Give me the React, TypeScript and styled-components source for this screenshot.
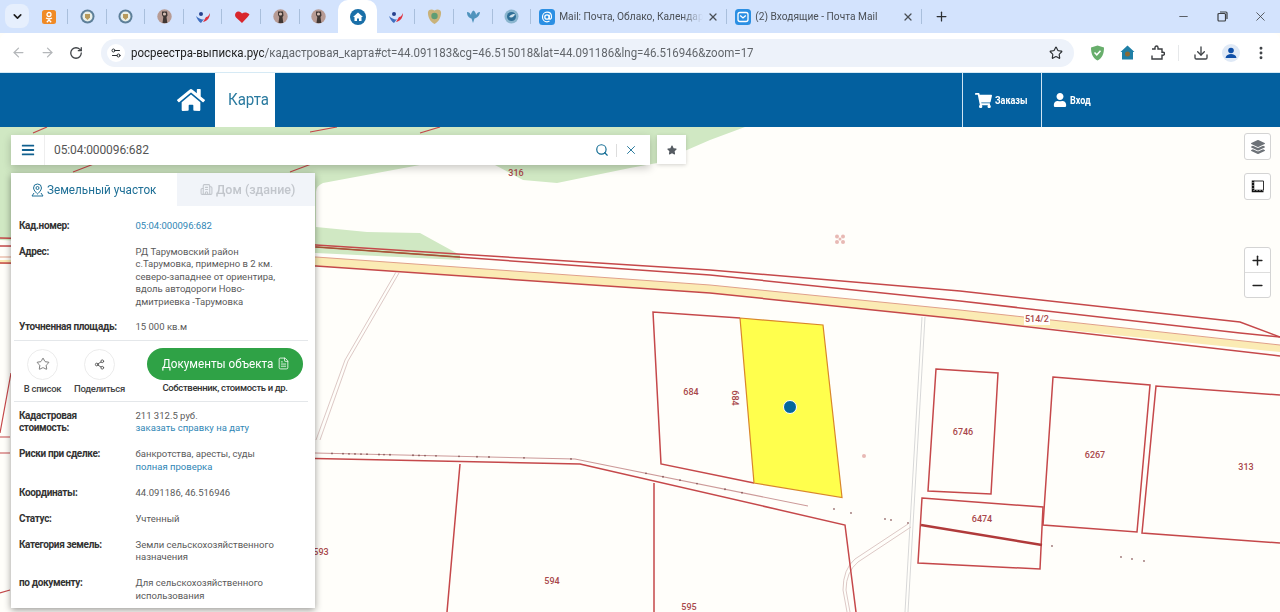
import React from "react";
import styled, { createGlobalStyle } from "styled-components";
import {
  ArrowLeft,
  ArrowRight,
  Building2,
  ChevronDown,
  Download,
  FileText,
  Minus,
  MoreVertical,
  Plus,
  RotateCw,
  Search,
  Settings2,
  Share2,
  Star,
  X
} from "lucide-react";
import { FaBars, FaHome, FaLayerGroup, FaShoppingCart, FaStar, FaUser } from "react-icons/fa";

const GlobalStyle = createGlobalStyle`
  html, body {
    margin: 0;
    padding: 0;
    height: 612px;
    overflow: hidden;
    background: #fffefa;
    font-family: "Roboto", "Liberation Sans", sans-serif;
  }
`;

const Page = styled.div`
  width: 1280px;
  height: 612px;
  display: flex;
  flex-direction: column;
  overflow: hidden;
`;

const Squeezed = styled.span<{ $x: number }>`
  display: inline-block;
  transform: scaleX(${(p) => p.$x});
  transform-origin: left center;
  white-space: nowrap;
`;

/* browser chrome */
const TabStrip = styled.div`
  height: 33px;
  flex: none;
  background: #d3e3fd;
  display: flex;
  align-items: center;
  padding-left: 5px;
  color: #3c4043;
`;
const TabList = styled.div`
  display: flex;
  align-items: center;
  margin-left: 0.5px;
`;
const ListButton = styled.div`
  width: 24px;
  height: 24px;
  margin-top: -1px;
  border-radius: 8px;
  background: #e6effd;
  display: flex;
  align-items: center;
  justify-content: center;
  color: #1f1f1f;
`;
const PinnedTab = styled.div<{ $active?: boolean; $divider?: boolean }>`
  position: relative;
  width: 38.6px;
  height: 33px;
  flex: none;
  display: flex;
  align-items: center;
  justify-content: center;
  background: ${(p) => (p.$active ? "#fff" : "transparent")};
  border-radius: ${(p) => (p.$active ? "10px 10px 0 0" : "0")};
  &::after {
    content: "";
    display: ${(p) => (p.$divider ? "block" : "none")};
    position: absolute;
    right: 0;
    top: 9px;
    width: 1px;
    height: 15px;
    background: #a9bfdc;
  }
`;
const WideTab = styled.div<{ $width: number }>`
  width: ${(p) => p.$width}px;
  height: 33px;
  flex: none;
  display: flex;
  align-items: center;
  padding: 0 8px;
  box-sizing: border-box;
  gap: 4px;
  position: relative;
  font-size: 10.2px;
  color: #4a4f55;
  &::after {
    content: "";
    position: absolute;
    right: 0;
    top: 9px;
    width: 1px;
    height: 15px;
    background: #a9bfdc;
  }
`;
const WideTitle = styled.span`
  flex: 1;
  white-space: nowrap;
  overflow: hidden;
  -webkit-mask-image: linear-gradient(90deg, #000 85%, transparent);
  mask-image: linear-gradient(90deg, #000 85%, transparent);
`;
const NewTab = styled.div`
  width: 38px;
  display: flex;
  justify-content: center;
  color: #2c2f33;
`;
const WindowButtons = styled.div`
  margin-left: auto;
  display: flex;
  align-items: center;
  color: #3d4043;
`;
const WindowButton = styled.div`
  width: 38.5px;
  display: flex;
  justify-content: center;
`;

const Toolbar = styled.div`
  height: 39px;
  flex: none;
  background: #fff;
  border-radius: 8px 8px 0 0;
  display: flex;
  align-items: center;
  position: relative;
`;
const NavIcons = styled.div`
  display: flex;
  align-items: center;
  gap: 14px;
  padding-left: 11px;
  width: 101px;
  box-sizing: border-box;
  color: #3f4347;
`;
const Omnibox = styled.div`
  width: 973px;
  height: 28px;
  border-radius: 14px;
  background: #edf2fa;
  display: flex;
  align-items: center;
  font-size: 12.4px;
  color: #62666b;
  padding: 0 11px 0 6px;
  box-sizing: border-box;
`;
const TuneBadge = styled.div`
  width: 18px;
  height: 18px;
  border-radius: 50%;
  background: #fff;
  display: flex;
  align-items: center;
  justify-content: center;
  color: #2b2f33;
  margin-right: 6px;
`;
const Domain = styled.span`
  color: #1f1f1f;
`;
const UrlText = styled(Squeezed)`
  flex: 1;
`;
const ExtIcons = styled.div`
  display: flex;
  align-items: center;
  padding-left: 8px;
  color: #3f4347;
`;
const ExtSlot = styled.div`
  width: 30px;
  display: flex;
  justify-content: center;
`;
const ExtDivider = styled.div`
  width: 1px;
  height: 16px;
  margin: 0 7px 0 6px;
  background: #e6e8ea;
`;

/* site header */
const SiteHeader = styled.header`
  height: 55px;
  flex: none;
  background: #03609f;
  display: flex;
  padding-left: 177px;
  color: #fff;
  border-top: 1px solid #d6eaf5;
  box-sizing: border-box;
`;
const HomeLink = styled.div`
  width: 38px;
  display: flex;
  align-items: center;
  color: #fff;
`;
const MapTab = styled.div`
  width: 60px;
  background: #fff;
  color: #2a7a9f;
  font-size: 16px;
  display: flex;
  align-items: center;
  padding: 0 0 2px 13px;
  box-sizing: border-box;
`;
const HeaderCell = styled.div<{ $width: number; $pad: number }>`
  width: ${(p) => p.$width}px;
  box-sizing: border-box;
  border-left: 1px solid #cfe4f2;
  display: flex;
  align-items: center;
  padding-left: ${(p) => p.$pad}px;
  gap: 3px;
  font-size: 11px;
  font-weight: 700;
`;
const HeaderSpacer = styled.div`
  flex: 1;
`;

/* map */
const MapArea = styled.main`
  position: relative;
  flex: 1;
  overflow: hidden;
  background: #fffefa;
`;
const MapCanvas = styled.svg`
  display: block;
  width: 1280px;
  height: 485px;
`;
const MapLabel = styled.text`
  font-family: "Roboto", sans-serif;
  font-size: 9px;
  font-weight: 500;
  fill: #a8474a;
  text-anchor: middle;
`;

const SearchRow = styled.div`
  position: absolute;
  left: 11px;
  top: 8px;
  display: flex;
  gap: 7px;
`;
const SearchBar = styled.div`
  width: 639px;
  height: 30px;
  background: #fff;
  display: flex;
  align-items: center;
  box-shadow: 0 3px 8px rgba(0, 0, 0, 0.22);
  font-size: 12px;
  color: #555;
`;
const MenuButton = styled.div`
  width: 33px;
  height: 30px;
  border-right: 1px solid #eee;
  display: flex;
  align-items: center;
  justify-content: center;
  color: #10608f;
`;
const SearchValue = styled.div`
  flex: 1;
  padding-left: 9px;
  letter-spacing: -0.1px;
`;
const SearchActions = styled.div`
  display: flex;
  align-items: center;
  gap: 7px;
  padding-right: 12px;
  color: #0f6a92;
`;
const ActionDivider = styled.span`
  width: 1px;
  height: 13px;
  background: #ddd;
`;
const StarButton = styled.div`
  width: 29px;
  height: 29px;
  background: #fff;
  display: flex;
  align-items: center;
  justify-content: center;
  color: #555b62;
  box-shadow: 0 1px 4px rgba(0, 0, 0, 0.18);
`;

const Panel = styled.aside`
  position: absolute;
  left: 11px;
  top: 46px;
  width: 304px;
  height: 435px;
  background: #fff;
  box-shadow: 0 2px 7px rgba(0, 0, 0, 0.4);
  overflow: hidden;
`;
const PanelTabs = styled.div`
  display: flex;
  height: 33px;
  font-size: 13px;
`;
const PanelTab = styled.div<{ $active?: boolean }>`
  width: ${(p) => (p.$active ? 166 : 138)}px;
  box-sizing: border-box;
  padding-left: ${(p) => (p.$active ? 20 : 23)}px;
  display: flex;
  align-items: center;
  gap: 3px;
  white-space: nowrap;
  background: ${(p) => (p.$active ? "#fff" : "#f1f4f9")};
  color: ${(p) => (p.$active ? "#1e6f96" : "#c2c6cc")};
  font-weight: ${(p) => (p.$active ? 400 : 500)};
`;
const RowList = styled.div<{ $top: number; $gap: number }>`
  display: flex;
  flex-direction: column;
  gap: ${(p) => p.$gap}px;
  padding: ${(p) => p.$top}px 8px 0 8px;
`;
const Row = styled.div`
  display: grid;
  grid-template-columns: 116.5px 1fr;
  font-size: 10px;
  line-height: 12.5px;
`;
const RowLabel = styled.div`
  font-weight: 700;
  color: #333;
  letter-spacing: -0.35px;
`;
const RowValue = styled.div`
  color: #5a5a5a;
  font-size: 9.5px;
`;
const Link = styled.div`
  color: #2f86b5;
`;
const ActionBar = styled.div`
  margin: 6px 7px 0 3px;
  height: 62px;
  box-sizing: border-box;
  border-top: 1px solid #e4e7ea;
  border-bottom: 1px solid #e4e7ea;
  display: flex;
  padding-top: 8px;
`;
const CircleAction = styled.div`
  width: 57px;
  display: flex;
  flex-direction: column;
  align-items: center;
  gap: 3px;
  font-size: 9.5px;
  font-weight: 500;
  color: #444;
  letter-spacing: -0.3px;
  white-space: nowrap;
`;
const Circle = styled.div`
  width: 31px;
  height: 31px;
  border-radius: 50%;
  border: 1px solid #ececec;
  box-sizing: border-box;
  display: flex;
  align-items: center;
  justify-content: center;
  color: #555;
`;
const DocsColumn = styled.div`
  margin: -1px 0 0 19px;
  width: 156px;
  display: flex;
  flex-direction: column;
  align-items: center;
  gap: 1px;
`;
const DocsButton = styled.div`
  width: 156px;
  height: 32px;
  box-sizing: border-box;
  padding-left: 15px;
  border-radius: 16px;
  background: #2fa246;
  color: #fff;
  display: flex;
  align-items: center;
  font-size: 13px;
`;
const DocsLabel = styled(Squeezed)`
  width: 115px;
`;
const DocsCaption = styled.div`
  font-size: 9.5px;
  font-weight: 500;
  color: #333;
  letter-spacing: -0.35px;
  white-space: nowrap;
  line-height: 13px;
`;

const MapControls = styled.div`
  position: absolute;
  right: 9px;
  top: 6px;
  display: flex;
  flex-direction: column;
`;
const MapButton = styled.div<{ $gap?: number }>`
  width: 27px;
  height: 27px;
  margin-bottom: ${(p) => p.$gap ?? 0}px;
  background: #fff;
  border: 1px solid #d4d4d4;
  border-radius: 3px;
  box-sizing: border-box;
  display: flex;
  align-items: center;
  justify-content: center;
  color: #222;
`;
const ZoomBox = styled.div`
  width: 27px;
  height: 51px;
  background: #fff;
  border: 1px solid #d4d4d4;
  border-radius: 3px;
  box-sizing: border-box;
  display: flex;
  flex-direction: column;
`;
const ZoomStep = styled.div`
  flex: 1;
  display: flex;
  align-items: center;
  justify-content: center;
  color: #222;
  & + & {
    border-top: 1px solid #ddd;
  }
`;

function Favicon({ kind }: { kind: string }) {
  switch (kind) {
    case "ok":
      return (
        <svg width="14" height="14" viewBox="0 0 14 14">
          <rect width="14" height="14" rx="2.5" fill="#f08a25" />
          <circle cx="7" cy="4.5" r="2" fill="none" stroke="#fff" strokeWidth="1.3" />
          <path d="M4 8c2 1.2 4 1.2 6 0M7 9v1M4.8 12.2 7 10l2.2 2.2" fill="none" stroke="#fff" strokeWidth="1.3" />
        </svg>
      );
    case "emblem":
      return (
        <svg width="15" height="15" viewBox="0 0 15 15">
          <circle cx="7.5" cy="7.5" r="7" fill="#5d7f99" />
          <circle cx="7.5" cy="7.5" r="5" fill="#e9efe8" />
          <path d="M5 5h5v3.5L7.5 11 5 8.5z" fill="#b79a5c" />
        </svg>
      );
    case "portrait":
      return (
        <svg width="15" height="15" viewBox="0 0 15 15">
          <circle cx="7.5" cy="7.5" r="7.2" fill="#b79b94" />
          <path d="M5 2.5h5l.5 4-1 1.5.8 6H5.5l.8-6-1.3-2z" fill="#3f3633" />
          <circle cx="7.5" cy="5" r="1.6" fill="#d3bcb2" />
        </svg>
      );
    case "flag":
      return (
        <svg width="16" height="14" viewBox="0 0 16 14">
          <circle cx="6" cy="4" r="2" fill="#27418e" />
          <path d="M1 6c3 3 7 4 8 3l-3 4C4 12 2 9 1 6z" fill="#3f6fc0" />
          <path d="M15 3c0 4-2 8-7 9l3-5c2 0 3-2 4-4z" fill="#de3341" />
        </svg>
      );
    case "heart":
      return (
        <svg width="16" height="14" viewBox="0 0 16 14">
          <path d="M8 13 2 7.500C0 5 1.500 2 4 1.500 6 1.200 7 2.500 8 3.500 10 2 13 2 15.500 4.500 13 8 10.500 10 8 13z" fill="#d8262c" />
        </svg>
      );
    case "home":
      return (
        <svg width="16" height="16" viewBox="0 0 16 16">
          <circle cx="8" cy="8" r="8" fill="#1a6fa8" />
          <path d="M8 3.500 3 8h1.500v4H7V9.500h2V12h2.500V8H13z" fill="#fff" />
        </svg>
      );
    case "gold":
      return (
        <svg width="15" height="17" viewBox="0 0 15 17">
          <path d="M1 4c1-3 4-3 6.500-1.500C10 1 13 1 14 4c.5 4-2 10-6.500 12C3 14 .5 8 1 4z" fill="#c9b27a" />
          <circle cx="7.500" cy="8" r="3.200" fill="#5f9d74" />
        </svg>
      );
    case "blue":
      return (
        <svg width="15" height="15" viewBox="0 0 15 15">
          <path d="M1 3c0 4 2 6 4.500 6.500L7 14l1.500-4.500C11 9 13.500 7 14 3c-2 0-3 1-4 3 0-2-1-3.500-2.500-4.500C6 2.500 5 4 5 6 4 4 3 3 1 3z" fill="#4f93bd" />
        </svg>
      );
    case "globe":
      return (
        <svg width="15" height="15" viewBox="0 0 15 15">
          <circle cx="7.500" cy="7.500" r="7" fill="#8bb6cf" />
          <circle cx="7.500" cy="7.500" r="4.500" fill="#2f6f97" />
          <path d="M5 8c2-3 4-3 6-3-1 3-3 4-6 3z" fill="#cfe2ec" />
        </svg>
      );
    case "mail":
      return (
        <svg width="16" height="16" viewBox="0 0 16 16">
          <rect width="16" height="16" rx="3.500" fill="#2b8fe3" />
          <circle cx="8" cy="8" r="2.200" fill="none" stroke="#fff" strokeWidth="1.300" />
          <path d="M10.200 5.800v3.200c0 1.800 2.300 1.500 2.300-1 0-3-2-4.800-4.500-4.800S3.500 5.200 3.500 8s2 4.800 4.500 4.800c1 0 1.800-.2 2.500-.7" fill="none" stroke="#fff" strokeWidth="1.200" />
        </svg>
      );
    default:
      return (
        <svg width="16" height="16" viewBox="0 0 16 16">
          <rect width="16" height="16" rx="3.500" fill="#2b8fe3" />
          <rect x="3" y="3.500" width="10" height="9" rx="2" fill="none" stroke="#fff" strokeWidth="1.300" />
          <path d="m5.200 6.500 2.800 2.500 2.800-2.500" fill="none" stroke="#fff" strokeWidth="1.300" />
        </svg>
      );
  }
}

const pinned = ["ok", "emblem", "emblem", "portrait", "flag", "heart", "portrait", "portrait", "home", "flag", "gold", "blue", "globe"];

const red = "#c5484a";

function MapDrawing() {
  const ticks = [332, 343, 349, 355, 361, 367, 379, 384, 390, 413, 419, 425, 436, 459, 477, 489, 524, 571, 646, 663, 680, 697, 725, 742];
  const dots: [number, number][] = [
    [834, 509], [851, 513], [885, 519], [891, 520], [908, 523], [1052, 546], [1121, 557], [1132, 559], [1144, 561]
  ];
  return (
    <MapCanvas viewBox="0 127 1280 485">
      <path
        d="M0 127H745L710 140 657 163 630 168 557 183 523 180 495 165H420L323 183Q316 186 316 192V227L367 232 420 233 460 255V260L316 253 0 240Z"
        fill="#d0e8c3"
      />
      <path d="M0 260 316 257 710 285 960 310 1280 345V352L960 319 710 293 316 266 0 264Z" fill="#fbebb4" />
      <polyline points="0,257 316,257 710,285 960,310 1280,345" fill="none" stroke="#e0a089" strokeWidth="1" />
      <polyline points="0,263 316,266 710,293 960,319 1280,356" fill="none" stroke={red} strokeWidth="1.500" />
      <polyline points="0,238 316,245 710,270 960,291 1240,322 1280,337" fill="none" stroke={red} strokeWidth="1.500" />
      <polyline points="0,246 316,247 710,275 960,301 1240,333 1280,337" fill="none" stroke={red} strokeWidth="1.500" />
      <path d="M316 247 460 257" stroke="#9a5a30" strokeWidth="1.200" />
      <g stroke={red} strokeWidth="1.200" fill="none">
        <path d="M33 133 47 127M73 172 130 150M290 172 330 157M420 133 440 127M310 132 337 127" />
        <path d="M11 373 0 433M0 437H10M0 453H10M0 593 10 590" />
      </g>

      {/* thin access roads */}
      <g stroke="#ddc9c6" strokeWidth="1" fill="none">
        <path d="M396 272 345 360 316 440M399 273 348 361 320 440" />
        <path d="M925 317 908 612M922 317 905 612" stroke="#d8d8d8" />
        <path d="M911 527 858 562Q846 572 846 590L850 612M908 524 855 559Q843 569 843 590L847 612" />
      </g>

      {/* ditch with ticks */}
      <polyline points="315,453 575,459 808,506" fill="none" stroke="#cc9a99" strokeWidth="1.100" />
      {ticks.map((x) => (
        <circle key={x} cx={x} cy={x <= 575 ? 453 + ((x - 315) * 6) / 260 : 459 + ((x - 575) * 47) / 233} r="0.900" fill="#8a5a5a" />
      ))}

      <g stroke={red} strokeWidth="1.500" fill="none">
        <polyline points="315,458.500 580,464 845,525 856,612" />
        <path d="M460 464 447 612M654 483V612" />
        <path d="M740 318 653 312 661 464 754 483" />
        <path d="M936 369 998 373 991 494 928 491Z" />
        <path d="M922 498 1043 507 1040 569 918 563Z" />
        <path d="M1053 377 1150 385 1137 532 1043 525Z" />
        <path d="M1280 395 1156 386 1142 533 1280 543" />
      </g>
      <path d="M921 525 1042 545" stroke="#b03a3a" strokeWidth="2.500" />
      <path d="M740 318 823 325 842 497.500 754 483Z" fill="#ffff4d" stroke="#d9862a" strokeWidth="1.200" />
      <circle cx="790" cy="407" r="6.500" fill="#04679c" stroke="#fff" strokeWidth="1" />

      <g fill="#e8b9b4">
        <circle cx="837" cy="236.500" r="2" />
        <circle cx="843" cy="236.500" r="2" />
        <circle cx="837" cy="242" r="2" />
        <circle cx="843" cy="242" r="2" />
        <circle cx="840" cy="239" r="1.500" />
        <circle cx="864" cy="456" r="2" />
      </g>
      {dots.map(([x, y]) => (
        <circle key={x} cx={x} cy={y} r="0.900" fill="#9a7070" />
      ))}

      <rect x="1024" y="314" width="26" height="11" fill="#fffefa" />
      <MapLabel x="516" y="176">316</MapLabel>
      <MapLabel x="691" y="395">684</MapLabel>
      <MapLabel transform="rotate(90 735 398)" x="735" y="401">684</MapLabel>
      <MapLabel x="963" y="435">6746</MapLabel>
      <MapLabel x="1095" y="458">6267</MapLabel>
      <MapLabel x="1246" y="470">313</MapLabel>
      <MapLabel x="982" y="522">6474</MapLabel>
      <MapLabel x="1037" y="322">514/2</MapLabel>
      <MapLabel x="321" y="555">593</MapLabel>
      <MapLabel x="552" y="584">594</MapLabel>
      <MapLabel x="689" y="610">595</MapLabel>
    </MapCanvas>
  );
}

export default function App() {
  return (
    <Page>
      <GlobalStyle />
      <TabStrip>
        <ListButton>
          <ChevronDown size={13} strokeWidth={3} />
        </ListButton>
        <TabList>
          {pinned.map((kind, i) => (
            <PinnedTab key={i} $active={kind === "home"} $divider={kind !== "home" && pinned[i + 1] !== "home"}>
              <Favicon kind={kind} />
            </PinnedTab>
          ))}
          <WideTab $width={196}>
            <Favicon kind="mail" />
            <WideTitle>Mail: Почта, Облако, Календарь</WideTitle>
            <X size={12} strokeWidth={2.5} />
          </WideTab>
          <WideTab $width={195}>
            <Favicon kind="inbox" />
            <WideTitle>(2) Входящие - Почта Mail</WideTitle>
            <X size={12} strokeWidth={2.5} />
          </WideTab>
          <NewTab>
            <Plus size={15} strokeWidth={2} />
          </NewTab>
        </TabList>
        <WindowButtons>
          <WindowButton>
            <Minus size={13} strokeWidth={1.5} />
          </WindowButton>
          <WindowButton>
            <svg width="11" height="11" viewBox="0 0 11 11" fill="none" stroke="currentColor" strokeWidth="1.200">
              <rect x="1" y="2.500" width="7.500" height="7.500" rx="1" />
              <path d="M3 1h6a1 1 0 0 1 1 1v6" />
            </svg>
          </WindowButton>
          <WindowButton>
            <X size={15} strokeWidth={1.3} />
          </WindowButton>
        </WindowButtons>
      </TabStrip>

      <Toolbar>
        <NavIcons>
          <ArrowLeft size={15} color="#b4b7ba" />
          <ArrowRight size={15} color="#b4b7ba" />
          <RotateCw size={14} strokeWidth={2.2} />
        </NavIcons>
        <Omnibox>
          <TuneBadge>
            <Settings2 size={12} />
          </TuneBadge>
          <UrlText $x={0.93}>
            <Domain>росреестра-выписка.рус</Domain>/кадастровая_карта#ct=44.091183&amp;cg=46.515018&amp;lat=44.091186&amp;lng=46.516946&amp;zoom=17
          </UrlText>
          <Star size={14} color="#2b2f33" strokeWidth={2} />
        </Omnibox>
        <ExtIcons>
          <ExtSlot>
            <svg width="15" height="16" viewBox="0 0 15 16">
              <path d="M7.500 0.500 14 2.500c0 6-1.500 10.500-6.500 13C2.500 13 1 8.500 1 2.500z" fill="#68ae6c" />
              <path d="m4.500 7.500 2.300 2.300 3.700-4" fill="none" stroke="#fff" strokeWidth="1.500" />
            </svg>
          </ExtSlot>
          <ExtSlot>
            <svg width="15" height="15" viewBox="0 0 15 15">
              <path d="M7.500 0.500 14.500 7H13v7.500H2V7H.5z" fill="#1f7fa6" />
              <circle cx="7.500" cy="9" r="2.500" fill="#8a6a35" />
            </svg>
          </ExtSlot>
          <ExtSlot>
            <svg width="16" height="16" viewBox="0 0 16 16" fill="none" stroke="#3a3d40" strokeWidth="1.400">
              <path d="M3 4h3V2.500a1.500 1.500 0 0 1 3 0V4h4v3.200h1a1.500 1.500 0 0 1 0 3h-1V14H3v-3.500" />
            </svg>
          </ExtSlot>
          <ExtDivider />
          <ExtSlot>
            <Download size={16} strokeWidth={2} />
          </ExtSlot>
          <ExtSlot>
            <svg width="18" height="18" viewBox="0 0 18 18">
              <circle cx="9" cy="9" r="9" fill="#dfe9f6" />
              <circle cx="9" cy="6.500" r="2.800" fill="#0e4fa8" />
              <path d="M3.500 14c.5-3 3-4 5.500-4s5 1 5.500 4z" fill="#0e4fa8" />
            </svg>
          </ExtSlot>
          <ExtSlot>
            <MoreVertical size={16} strokeWidth={2.4} />
          </ExtSlot>
        </ExtIcons>
      </Toolbar>

      <SiteHeader>
        <HomeLink>
          <FaHome size={28} />
        </HomeLink>
        <MapTab>
          <Squeezed $x={0.94}>Карта</Squeezed>
        </MapTab>
        <HeaderSpacer />
        <HeaderCell $width={79} $pad={12}>
          <FaShoppingCart size={17} />
          <Squeezed $x={0.82}>Заказы</Squeezed>
        </HeaderCell>
        <HeaderCell $width={239} $pad={11}>
          <FaUser size={14} />
          <Squeezed $x={0.82}>Вход</Squeezed>
        </HeaderCell>
      </SiteHeader>

      <MapArea>
        <MapDrawing />

        <SearchRow>
          <SearchBar>
            <MenuButton>
              <FaBars size={14} />
            </MenuButton>
            <SearchValue>05:04:000096:682</SearchValue>
            <SearchActions>
              <Search size={14} strokeWidth={2} />
              <ActionDivider />
              <X size={14} strokeWidth={1.5} />
            </SearchActions>
          </SearchBar>
          <StarButton>
            <FaStar size={10} />
          </StarButton>
        </SearchRow>

        <Panel>
          <PanelTabs>
            <PanelTab $active>
              <svg width="13" height="14" viewBox="0 0 13 14" fill="none" stroke="currentColor" strokeWidth="1">
                <path d="M6.500 1a4 4 0 0 1 4 4c0 2.500-4 6-4 6s-4-3.500-4-6a4 4 0 0 1 4-4z" />
                <circle cx="6.500" cy="5" r="1.500" />
                <path d="M3 10 1 13h11l-2-3" />
              </svg>
              <Squeezed $x={0.9}>Земельный участок</Squeezed>
            </PanelTab>
            <PanelTab>
              <Building2 size={13} />
              <Squeezed $x={0.96}>Дом (здание)</Squeezed>
            </PanelTab>
          </PanelTabs>
          <RowList $top={14} $gap={13}>
            <Row>
              <RowLabel>Кад.номер:</RowLabel>
              <RowValue>
                <Link>05:04:000096:682</Link>
              </RowValue>
            </Row>
            <Row>
              <RowLabel>Адрес:</RowLabel>
              <RowValue>
                РД Тарумовский район
                <br />
                с.Тарумовка, примерно в 2 км.
                <br />
                северо-западнее от ориентира,
                <br />
                вдоль автодороги Ново-
                <br />
                дмитриевка -Тарумовка
              </RowValue>
            </Row>
            <Row>
              <RowLabel>Уточненная площадь:</RowLabel>
              <RowValue>15 000 кв.м</RowValue>
            </Row>
          </RowList>
          <ActionBar>
            <CircleAction>
              <Circle>
                <Star size={14} strokeWidth={1.3} />
              </Circle>
              В список
            </CircleAction>
            <CircleAction>
              <Circle>
                <Share2 size={11} strokeWidth={2} />
              </Circle>
              Поделиться
            </CircleAction>
            <DocsColumn>
              <DocsButton>
                <DocsLabel $x={0.9}>Документы объекта</DocsLabel>
                <FileText size={13} strokeWidth={1.5} />
              </DocsButton>
              <DocsCaption>Собственник, стоимость и др.</DocsCaption>
            </DocsColumn>
          </ActionBar>
          <RowList $top={8} $gap={13.5}>
            <Row>
              <RowLabel>
                Кадастровая
                <br />
                стоимость:
              </RowLabel>
              <RowValue>
                211 312.5 руб.
                <Link>заказать справку на дату</Link>
              </RowValue>
            </Row>
            <Row>
              <RowLabel>Риски при сделке:</RowLabel>
              <RowValue>
                банкротства, аресты, суды
                <Link>полная проверка</Link>
              </RowValue>
            </Row>
            <Row>
              <RowLabel>Координаты:</RowLabel>
              <RowValue>44.091186, 46.516946</RowValue>
            </Row>
            <Row>
              <RowLabel>Статус:</RowLabel>
              <RowValue>Учтенный</RowValue>
            </Row>
            <Row>
              <RowLabel>Категория земель:</RowLabel>
              <RowValue>
                Земли сельскохозяйственного
                <br />
                назначения
              </RowValue>
            </Row>
            <Row>
              <RowLabel>по документу:</RowLabel>
              <RowValue>
                Для сельскохозяйственного
                <br />
                использования
              </RowValue>
            </Row>
          </RowList>
        </Panel>

        <MapControls>
          <MapButton $gap={13}>
            <FaLayerGroup size={14} color="#6d7278" />
          </MapButton>
          <MapButton $gap={47}>
            <svg width="15" height="15" viewBox="0 0 15 15">
              <path d="M3 1.500V12h10.500" fill="none" stroke="#111" strokeWidth="2.500" />
              <path d="M3 3V11.500H13" fill="none" stroke="#fff" strokeWidth="0.800" strokeDasharray="1 2" />
              <path d="M4 2h9.500v9" fill="none" stroke="#333" strokeWidth="1" />
            </svg>
          </MapButton>
          <ZoomBox>
            <ZoomStep>
              <Plus size={15} strokeWidth={2.4} />
            </ZoomStep>
            <ZoomStep>
              <Minus size={15} strokeWidth={2.4} />
            </ZoomStep>
          </ZoomBox>
        </MapControls>
      </MapArea>
    </Page>
  );
}
